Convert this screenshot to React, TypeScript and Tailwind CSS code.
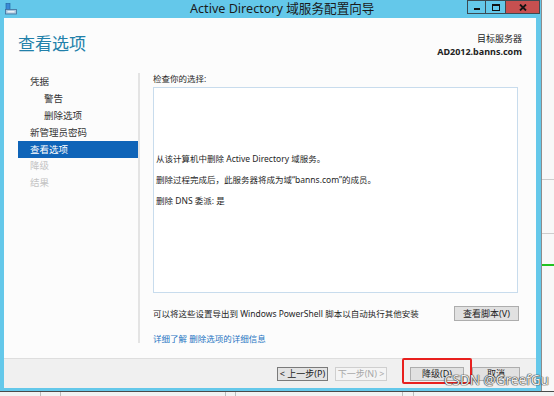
import React from "react";

const font = "font-['Noto_Sans','Noto_Sans_CJK_SC',sans-serif]";

function TitleIcon() {
  return (
    <svg width="12" height="12" viewBox="0 0 12 12" className="mt-[3px] ml-[5px] shrink-0">
      <rect x="1" y="0.5" width="4" height="7" fill="#3a8ad6" stroke="#1f5f9e" strokeWidth="0.6" />
      <rect x="0.5" y="6.5" width="11" height="4.5" fill="#a9c6de" stroke="#3e6f9c" strokeWidth="0.8" />
      <rect x="2.5" y="8" width="7" height="1.5" fill="#e8f0f7" />
    </svg>
  );
}

function NavItem({
  label,
  sub,
  active,
  disabled,
}: {
  label: string;
  sub?: boolean;
  active?: boolean;
  disabled?: boolean;
}) {
  return (
    <div
      className={
        "flex h-[16.8px] items-center text-[9.5px] leading-none " +
        (sub ? "pl-[26px] " : "pl-[12px] ") +
        (active ? "bg-[#0f64b8] text-white " : disabled ? "text-[#c4c4c4] " : "text-[#333333] ")
      }
    >
      {label}
    </div>
  );
}

function Btn({
  children,
  w,
  disabled,
  focus,
}: {
  children: React.ReactNode;
  w: string;
  disabled?: boolean;
  focus?: boolean;
}) {
  return (
    <div
      className={
        "flex h-[14px] items-center justify-center border text-[9px] leading-none " +
        w +
        (disabled
          ? " border-[#cfcfcf] bg-[#f4f4f4] text-[#a8a8a8]"
          : focus
          ? " border-[#7a7a7a] bg-[#e3e3e3] text-[#222]"
          : " border-[#adadad] bg-[#e1e1e1] text-[#222]")
      }
    >
      {children}
    </div>
  );
}

export default function App() {
  return (
    <div className={"relative flex h-[396px] w-[554px] flex-col overflow-hidden bg-[#f6f6f6] " + font}>
      <div className="flex h-[391px]">
        {/* window */}
        <div className="flex w-[541px] flex-col bg-[#64c8ea]">
          {/* title bar */}
          <div className="flex h-[18px] items-start">
            <TitleIcon />
            <div className="ml-[173px] mt-[1px] whitespace-nowrap text-[12.6px] leading-[16px] text-[#1b1b1b]">
              Active Directory 域服务配置向导
            </div>
            <div className="ml-auto mr-[1px] flex h-[14px]">
              <div className="flex w-[19px] items-end justify-center border border-[#3b4a52] pb-[3px]">
                <div className="h-[2px] w-[6px] bg-[#111]" />
              </div>
              <div className="flex w-[20px] items-center justify-center border-y border-r border-[#3b4a52]">
                <div className="h-[7px] w-[8px] border border-t-2 border-[#111]" />
              </div>
              <div className="flex w-[34px] items-center justify-center border-y border-r border-[#3b4a52] bg-[#c75050]">
                <svg width="8" height="7" viewBox="0 0 8 7">
                  <path d="M1 0.5 L7 6.5 M7 0.5 L1 6.5" stroke="#141414" strokeWidth="1.8" />
                </svg>
              </div>
            </div>
          </div>

          {/* client area */}
          <div className="mb-[3px] ml-[4px] mr-[5px] flex flex-1 flex-col bg-[#fcfcfc]">
            {/* header */}
            <div className="flex h-[52px] items-start justify-between">
              <div className="pl-[14px] pt-[16px] text-[17px] leading-[20px] text-[#2180aa]">查看选项</div>
              <div className="pr-[14px] pt-[14px] text-right text-[9px] text-[#222]">
                <div className="leading-[13px]">目标服务器</div>
                <div className="font-bold leading-[13px]">AD2012.banns.com</div>
              </div>
            </div>

            {/* main */}
            <div className="flex flex-1">
              <div className="mb-[15px] mt-[3px] flex w-[136px] flex-col border-r-2 border-[#e4e4e4] pl-[14px] pt-[0.8px]">
                <NavItem label="凭据" />
                <NavItem label="警告" sub />
                <NavItem label="删除选项" sub />
                <NavItem label="新管理员密码" />
                <NavItem label="查看选项" active />
                <NavItem label="降级" disabled />
                <NavItem label="结果" disabled />
              </div>

              <div className="flex flex-1 flex-col pl-[13px] pr-[18px] pt-[4px] text-[8.5px] text-[#262626]">
                <div className="h-[10px] leading-[10px]">检查你的选择:</div>
                <div className="mt-[3px] flex h-[206px] flex-col gap-[11px] border border-[#c8dced] bg-white pl-[2px] pt-[66px]">
                  <div className="leading-[10px]">从该计算机中删除 Active Directory 域服务。</div>
                  <div className="leading-[10px]">删除过程完成后，此服务器将成为域“banns.com”的成员。</div>
                  <div className="leading-[10px]">删除 DNS 委派: 是</div>
                </div>
                <div className="mt-[13px] flex items-center justify-between">
                  <div className="leading-[10px]">可以将这些设置导出到 Windows PowerShell 脚本以自动执行其他安装</div>
                  <div className="mr-[-1px] flex h-[15px] w-[65px] items-center justify-center border border-[#adadad] bg-[#e1e1e1] text-[9px] leading-none text-[#222]">
                    查看脚本(V)
                  </div>
                </div>
                <div className="mt-[13px] leading-[10px] text-[#1e74c2]">详细了解 删除选项的详细信息</div>
              </div>
            </div>

            {/* bottom bar */}
            <div className="flex h-[30px] items-center border-t border-[#dedede] bg-[#f0f0f0] pr-[16px]">
              <div className="ml-auto flex items-center">
                <Btn w="w-[51px]" focus>
                  &lt; 上一步(P)
                </Btn>
                <div className="ml-[7px]">
                  <Btn w="w-[52px]" disabled>
                    下一步(N) &gt;
                  </Btn>
                </div>
                <div className="ml-[23px]">
                  <Btn w="w-[54px]">降级(D)</Btn>
                </div>
                <div className="ml-[8px]">
                  <Btn w="w-[48px]">取消</Btn>
                </div>
              </div>
            </div>
          </div>
        </div>

        {/* background window on the right */}
        <div className="flex flex-1 flex-col border-l border-[#8c8c8c] bg-[#f8f8f8]">
          <div className="h-[180px] border-b border-[#cdcdcd]" />
          <div className="h-[54px] border-b border-[#cdcdcd]" />
          <div className="h-[32px] border-b-2 border-[#22c322]" />
        </div>
      </div>

      {/* bottom strip */}
      <div className="flex flex-1 border-t border-[#4a4a4a] bg-[#f2f2f2]">
        <div className="w-[40px]" />
        <div className="w-[20px] border-l border-[#bdbdbd]" />
        <div className="w-[165px] border-l border-[#bdbdbd]" />
        <div className="w-[10px] border-l border-[#bdbdbd]" />
        <div className="w-[167px] border-l border-[#bdbdbd]" />
        <div className="w-[11px] border-l border-[#bdbdbd]" />
        <div className="flex-1 border-l border-[#bdbdbd]" />
      </div>

      {/* red annotation */}
      <div className="absolute left-[402px] top-[358px] h-[26px] w-[70px] rounded-[2px] border-2 border-[#e8201e]" />

      {/* watermark */}
      <div className="absolute left-[444px] top-[371px] whitespace-nowrap font-['Noto_Sans',sans-serif] text-[13.5px] leading-[18px] text-[#eeeeee] [text-shadow:0_0_1px_#333,0_0_1px_#333,0_0_1px_#333]">
        CSDN @GreefGu
      </div>
    </div>
  );
}
